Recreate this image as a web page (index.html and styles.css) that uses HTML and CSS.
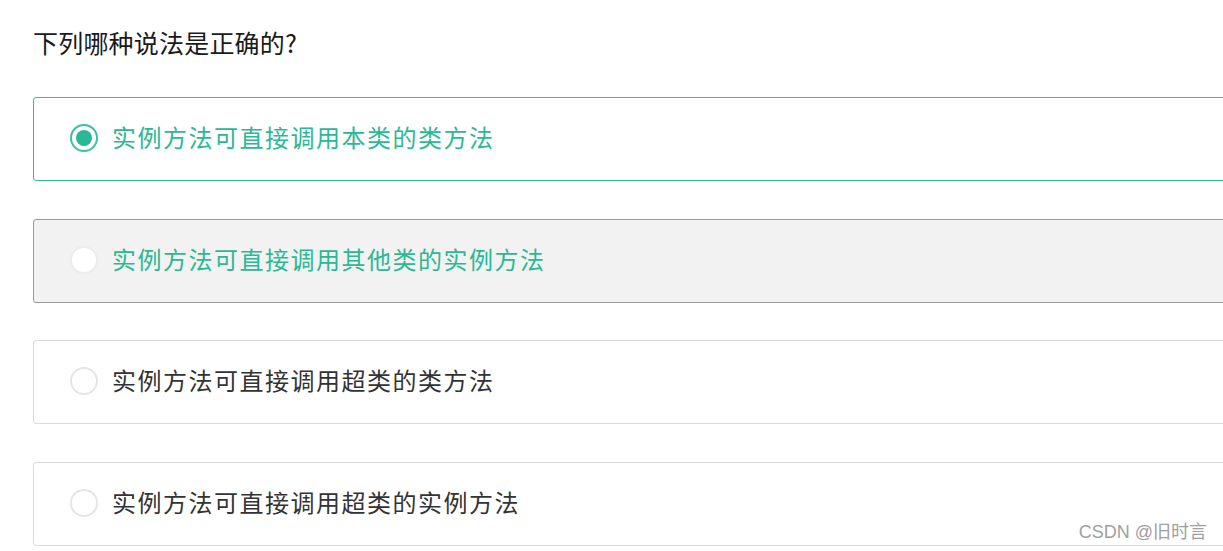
FILE: index.html
```html
<!DOCTYPE html>
<html lang="zh">
<head>
<meta charset="utf-8">
<link rel="stylesheet" href="styles.css">
</head>
<body>
<div class="page">
  <h1 class="question">下列哪种说法是正确的?</h1>
  <ul class="options">
    <li class="option selected"><span class="radio"></span><span class="label">实例方法可直接调用本类的类方法</span></li>
    <li class="option hover"><span class="radio"></span><span class="label">实例方法可直接调用其他类的实例方法</span></li>
    <li class="option"><span class="radio"></span><span class="label">实例方法可直接调用超类的类方法</span></li>
    <li class="option"><span class="radio"></span><span class="label">实例方法可直接调用超类的实例方法</span></li>
  </ul>
  <div class="watermark">CSDN @旧时言</div>
</div>
</body>
</html>
```

FILE: styles.css
```css
html, body {
  margin: 0;
  padding: 0;
  background: #ffffff;
  overflow: hidden;
}
.page {
  width: 1223px;
  height: 551px;
  padding-left: 33px;
  box-sizing: border-box;
  position: relative;
  font-family: "Noto Sans CJK SC", "Noto Sans", sans-serif;
}
.question {
  margin: 0;
  padding-top: 24px;
  height: 97px;
  box-sizing: border-box;
  font-size: 25px;
  font-weight: 400;
  line-height: 36px;
  color: #1a1a1a;
  letter-spacing: 0.2px;
}
.options {
  list-style: none;
  margin: 0;
  padding: 0;
  display: flex;
  flex-direction: column;
  gap: 37.5px;
}
.option {
  width: 1220px;
  height: 84px;
  box-sizing: border-box;
  border: 1px solid #d9d9d9;
  border-radius: 3px;
  display: flex;
  align-items: center;
  padding-left: 36px;
  padding-bottom: 4px;
  background: #fff;
}
.radio {
  width: 28px;
  height: 28px;
  box-sizing: border-box;
  border-radius: 50%;
  border: 2px solid #e6e6e6;
  background: #fff;
  position: relative;
  flex: none;
  margin-top: 2px;
}
.label {
  margin-left: 14px;
  font-size: 24px;
  line-height: 34px;
  color: #333;
  letter-spacing: 1.5px;
}
.option.selected {
  border: 1px solid #35bd9b;
}
.option.selected .radio {
  border-color: #40c0a0;
}
.option.selected .radio::after {
  content: "";
  position: absolute;
  left: 4px;
  top: 4px;
  width: 16px;
  height: 16px;
  border-radius: 50%;
  background: #2bb894;
}
.option.selected .label,
.option.hover .label {
  color: #2bb894;
}
.option.hover {
  background: #f2f2f2;
  border-color: #9a9a9a;
}
.option.hover .radio {
  border-color: #ececec;
}
.watermark {
  position: absolute;
  right: 16px;
  bottom: 8px;
  font-family: "Liberation Sans", "Noto Sans CJK SC", sans-serif;
  font-size: 18px;
  color: #a0a0a0;
}
```
